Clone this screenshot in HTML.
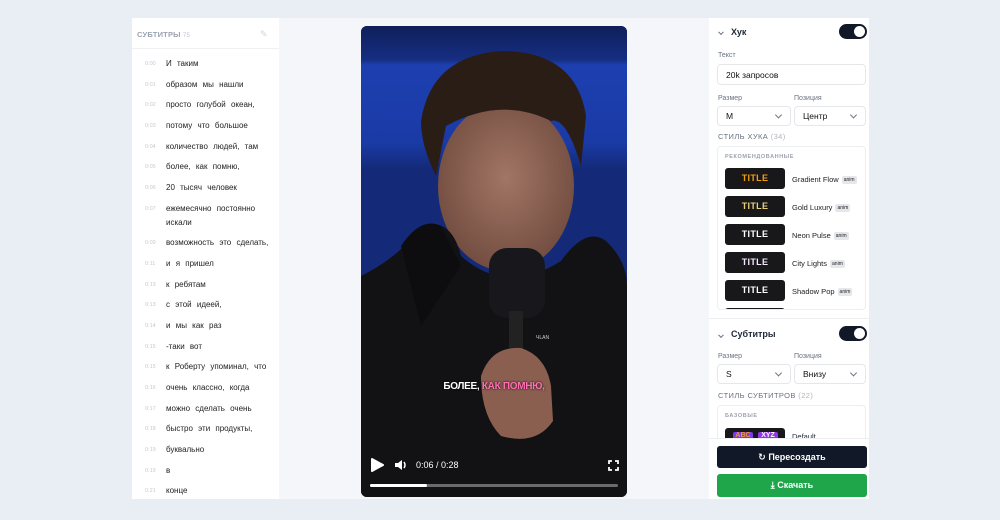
<!DOCTYPE html>
<html><head><meta charset="utf-8"><style>
*{margin:0;padding:0;box-sizing:border-box}
body{width:1000px;height:520px;background:#e9eef4;font-family:"Liberation Sans","DejaVu Sans",sans-serif;position:relative;overflow:hidden;color:#1f2937}
.abs{position:absolute}
#left{left:132px;top:18px;width:147px;height:481px;background:#fff;overflow:hidden}
#mid{left:279px;top:18px;width:430px;height:481px;background:#f4f6f9}
#right{left:709px;top:18px;width:160px;height:481px;background:#fff}
.row{position:absolute;left:0;font-size:8px;color:#222;white-space:nowrap;word-spacing:3px}
.row i{font-style:normal;color:#c5c9cf;font-size:5.5px;position:absolute;left:13px;top:1px;word-spacing:0}
.row span{position:absolute;left:34px;line-height:14px;top:-3px}
.lbl{font-size:7px;color:#6b7280}
.inp{position:absolute;border:1px solid #e5e7eb;border-radius:4px;font-size:8.5px;color:#111;padding-left:8px;display:flex;align-items:center;background:#fff}
.chev{position:absolute;right:9px;top:50%;width:5px;height:5px;border-right:1px solid #6b7280;border-bottom:1px solid #6b7280;transform:translateY(-70%) rotate(45deg)}
.tog{position:absolute;width:28px;height:15px;border-radius:8px;background:#111827}
.tog::after{content:"";position:absolute;right:2px;top:2px;width:11px;height:11px;border-radius:50%;background:#fff}
.sty{position:absolute;left:16px;width:60px;height:21px;background:#18181b;border-radius:3px;font-weight:bold;font-size:9px;text-align:center;line-height:21px;letter-spacing:.3px}
.nm{position:absolute;left:82px;font-size:7.5px;color:#222;white-space:nowrap}
.nm b{font-weight:normal;font-size:5px;background:#e5e7eb;border-radius:2px;padding:1px 2px;margin-left:3px;vertical-align:1px}
</style></head><body>
<div id="left" class="abs">
 <div class="abs" style="left:5px;top:12px;font-size:7.5px;font-weight:bold;color:#9ca3af;letter-spacing:.2px">СУБТИТРЫ <span style="font-weight:normal;font-size:6px;color:#c0c4ca">75</span></div>
 <div class="abs" style="left:128px;top:11px;font-size:9px;color:#d1d5db">✎</div>
 <div class="abs" style="left:0;top:30px;width:147px;height:1px;background:#eef0f3"></div>
 <div class="row" style="top:42px"><i>0:00</i><span>И таким</span></div>
 <div class="row" style="top:63px"><i>0:01</i><span>образом мы нашли</span></div>
 <div class="row" style="top:83px"><i>0:02</i><span>просто голубой океан,</span></div>
 <div class="row" style="top:104px"><i>0:03</i><span>потому что большое</span></div>
 <div class="row" style="top:125px"><i>0:04</i><span>количество людей, там</span></div>
 <div class="row" style="top:145px"><i>0:05</i><span>более, как помню,</span></div>
 <div class="row" style="top:166px"><i>0:06</i><span>20 тысяч человек</span></div>
 <div class="row" style="top:187px"><i>0:07</i><span>ежемесячно постоянно<br>искали</span></div>
 <div class="row" style="top:221px"><i>0:09</i><span>возможность это сделать,</span></div>
 <div class="row" style="top:242px"><i>0:11</i><span>и я пришел</span></div>
 <div class="row" style="top:263px"><i>0:13</i><span>к ребятам</span></div>
 <div class="row" style="top:283px"><i>0:13</i><span>с этой идеей,</span></div>
 <div class="row" style="top:304px"><i>0:14</i><span>и мы как раз</span></div>
 <div class="row" style="top:325px"><i>0:15</i><span>-таки вот</span></div>
 <div class="row" style="top:345px"><i>0:15</i><span>к Роберту упоминал, что</span></div>
 <div class="row" style="top:366px"><i>0:16</i><span>очень классно, когда</span></div>
 <div class="row" style="top:387px"><i>0:17</i><span>можно сделать очень</span></div>
 <div class="row" style="top:407px"><i>0:18</i><span>быстро эти продукты,</span></div>
 <div class="row" style="top:428px"><i>0:19</i><span>буквально</span></div>
 <div class="row" style="top:449px"><i>0:19</i><span>в</span></div>
 <div class="row" style="top:469px"><i>0:21</i><span>конце</span></div>
</div>
<div id="mid" class="abs"></div>
<div class="abs" style="left:361px;top:26px;width:266px;height:471px;border-radius:6px;overflow:hidden;background:#0b0b0d">
<svg width="266" height="471" viewBox="0 0 266 471">
 <defs><linearGradient id="bg" x1="0" y1="0" x2="0" y2="1"><stop offset="0" stop-color="#0f1f5a"/><stop offset=".13" stop-color="#162e82"/><stop offset=".15" stop-color="#1d3fb0"/><stop offset=".45" stop-color="#1a3aa6"/><stop offset=".55" stop-color="#142a78"/></linearGradient>
 <radialGradient id="fc" cx=".5" cy=".45" r=".6"><stop offset="0" stop-color="#a27565"/><stop offset="1" stop-color="#6e4a3d"/></radialGradient></defs>
 <rect width="266" height="260" fill="url(#bg)"/>
 <ellipse cx="145" cy="160" rx="68" ry="85" fill="url(#fc)"/>
 <path d="M60 95 Q70 30 140 25 Q215 25 225 90 L220 140 Q205 90 190 95 Q140 70 85 100 L75 150 Q60 120 60 95Z" fill="#2a1d16"/>
 <path d="M0 250 Q40 230 60 200 Q90 190 100 230 Q145 270 200 235 Q225 200 245 215 Q266 235 266 260 L266 471 L0 471Z" fill="#121214"/>
 <path d="M40 220 Q60 190 80 200 L100 240 L60 300Z" fill="#0d0d0f"/>
 <rect x="128" y="222" width="56" height="70" rx="18" fill="#18181c"/>
 <rect x="148" y="285" width="14" height="60" fill="#222"/>
 <path d="M120 350 Q130 320 160 322 Q185 330 190 360 L192 395 Q175 420 140 410 Q120 390 120 350Z" fill="#8a5f50"/>
 <text x="175" y="313" font-size="5" fill="#ccc" font-family="Liberation Sans">ЧLAN</text>
</svg>
<div class="abs" style="left:0;top:355px;width:266px;text-align:center;font-size:10px;font-weight:900;color:#fff;letter-spacing:-.3px;text-shadow:0 0 2px #000">БОЛЕЕ, <span style="color:#ff6fb3">КАК ПОМНЮ,</span></div>
<svg class="abs" style="left:9px;top:432px" width="14" height="14"><path d="M2 1 L13 7 L2 13Z" fill="#fff" stroke="#fff" stroke-linejoin="round" stroke-width="2"/></svg>
<svg class="abs" style="left:33px;top:433px" width="14" height="12"><path d="M1 4H4L8 1V11L4 8H1Z" fill="#fff"/><path d="M10 3Q12 6 10 9" stroke="#fff" fill="none" stroke-width="1.5"/></svg>
<div class="abs" style="left:55px;top:434px;font-size:9px;color:#fff">0:06 / 0:28</div>
<svg class="abs" style="left:247px;top:434px" width="11" height="11" fill="none" stroke="#fff" stroke-width="1.8"><path d="M1 4V1H4M7 1H10V4M10 7V10H7M4 10H1V7"/></svg>
<div class="abs" style="left:9px;top:458px;width:248px;height:3px;background:#6b6b6b;border-radius:2px"><div style="width:57px;height:3px;background:#fff;border-radius:2px"></div></div>
</div>
<div id="right" class="abs">
 <div class="chev" style="left:10px;right:auto;top:15px;width:4px;height:4px"></div>
 <div class="abs" style="left:22px;top:9px;font-size:9px;font-weight:bold">Хук</div>
 <div class="tog" style="left:130px;top:6px"></div>
 <div class="abs lbl" style="left:9px;top:34px">Текст</div>
 <div class="inp" style="left:8px;top:46px;width:149px;height:21px">20k запросов</div>
 <div class="abs lbl" style="left:9px;top:77px">Размер</div>
 <div class="abs lbl" style="left:85px;top:77px">Позиция</div>
 <div class="inp" style="left:8px;top:88px;width:74px;height:20px">M<div class="chev"></div></div>
 <div class="inp" style="left:85px;top:88px;width:72px;height:20px">Центр<div class="chev"></div></div>
 <div class="abs" style="left:9px;top:114px;font-size:7.5px;color:#6b7280;letter-spacing:.4px">СТИЛЬ ХУКА <span style="color:#b0b5bc">(34)</span></div>
 <div class="abs" style="left:8px;top:128px;width:149px;height:164px;border:1px solid #eceef1;border-radius:4px;overflow:hidden">
  <div class="abs" style="left:7px;top:7px;font-size:5.5px;color:#9ca3af;font-weight:bold;letter-spacing:.6px">РЕКОМЕНДОВАННЫЕ</div>
  <div class="sty" style="top:21px;left:7px;color:#f59e0b">TITLE</div><div class="nm" style="left:74px;top:28px">Gradient Flow<b>anim</b></div>
  <div class="sty" style="top:49px;left:7px;color:#e8d07a">TITLE</div><div class="nm" style="left:74px;top:56px">Gold Luxury<b>anim</b></div>
  <div class="sty" style="top:77px;left:7px;color:#fff">TITLE</div><div class="nm" style="left:74px;top:84px">Neon Pulse<b>anim</b></div>
  <div class="sty" style="top:105px;left:7px;color:#f5e6ff">TITLE</div><div class="nm" style="left:74px;top:112px">City Lights<b>anim</b></div>
  <div class="sty" style="top:133px;left:7px;color:#fff">TITLE</div><div class="nm" style="left:74px;top:140px">Shadow Pop<b>anim</b></div>
  <div class="sty" style="top:161px;left:7px"></div>
 </div>
 <div class="abs" style="left:0;top:300px;width:160px;height:1px;background:#eceef1"></div>
 <div class="chev" style="left:10px;right:auto;top:318px;width:4px;height:4px"></div>
 <div class="abs" style="left:22px;top:311px;font-size:9px;font-weight:bold">Субтитры</div>
 <div class="tog" style="left:130px;top:308px"></div>
 <div class="abs lbl" style="left:9px;top:335px">Размер</div>
 <div class="abs lbl" style="left:85px;top:335px">Позиция</div>
 <div class="inp" style="left:8px;top:346px;width:74px;height:20px">S<div class="chev"></div></div>
 <div class="inp" style="left:85px;top:346px;width:72px;height:20px">Внизу<div class="chev"></div></div>
 <div class="abs" style="left:9px;top:373px;font-size:7.5px;color:#6b7280;letter-spacing:.4px">СТИЛЬ СУБТИТРОВ <span style="color:#b0b5bc">(22)</span></div>
 <div class="abs" style="left:8px;top:387px;width:149px;height:33px;border:1px solid #eceef1;border-bottom:none;border-radius:4px 4px 0 0;overflow:hidden">
  <div class="abs" style="left:7px;top:7px;font-size:5.5px;color:#9ca3af;font-weight:bold;letter-spacing:.6px">БАЗОВЫЕ</div>
  <div class="abs" style="left:7px;top:22px;width:60px;height:14px;background:#18181b;border-radius:3px"></div>
  <div class="abs" style="left:15px;top:26px;width:20px;height:10px;background:#7c3aed;border-radius:2px;font-size:7px;color:#f59e0b;font-weight:bold;text-align:center">ABC</div>
  <div class="abs" style="left:40px;top:26px;width:20px;height:10px;background:#9333ea;border-radius:2px;font-size:7px;color:#fff;font-weight:bold;text-align:center">XYZ</div>
  <div class="abs" style="left:74px;top:26px;font-size:7.5px">Default</div>
 </div>
 <div class="abs" style="left:0;top:420px;width:160px;height:1px;background:#eceef1"></div>
 <div class="abs" style="left:8px;top:428px;width:150px;height:22px;background:#111827;border-radius:3px;color:#fff;font-size:9px;font-weight:bold;text-align:center;line-height:22px">↻ Пересоздать</div>
 <div class="abs" style="left:8px;top:456px;width:150px;height:23px;background:#1fa64a;border-radius:3px;color:#fff;font-size:9px;font-weight:bold;text-align:center;line-height:23px">⤓ Скачать</div>
</div>
</body></html>
